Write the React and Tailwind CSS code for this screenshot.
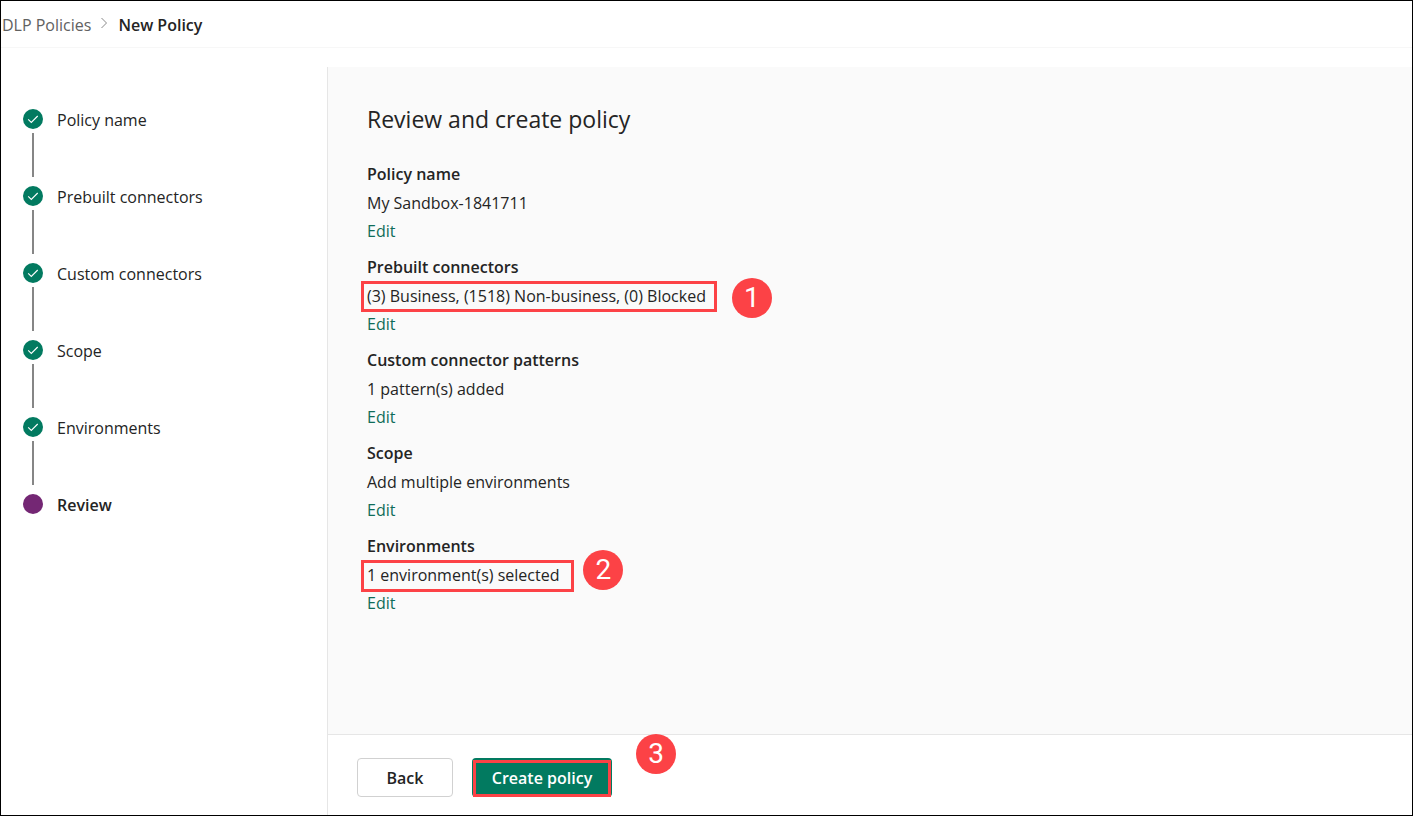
const steps = ['Policy name', 'Prebuilt connectors', 'Custom connectors', 'Scope', 'Environments'];

const sections = [
  { title: 'Policy name', value: 'My Sandbox-1841711' },
  { title: 'Prebuilt connectors', value: '(3) Business, (1518) Non-business, (0) Blocked', callout: 1 },
  { title: 'Custom connector patterns', value: '1 pattern(s) added' },
  { title: 'Scope', value: 'Add multiple environments' },
  { title: 'Environments', value: '1 environment(s) selected', callout: 2 },
];

const callouts = {
  1: {
    box: 'absolute -left-[6px] -right-[11px] -top-px -bottom-0.5 border-3 border-[#fc4246] pointer-events-none',
    badge: 'absolute left-full ml-[26px] -top-1',
  },
  2: {
    box: 'absolute -left-[6px] -right-[15px] -top-px -bottom-[3px] border-3 border-[#fc4246] pointer-events-none',
    badge: 'absolute left-full ml-6 -top-[11px]',
  },
};

function Badge({ n, className }) {
  return (
    <span className={className}>
      <span className="flex size-10 items-center justify-center rounded-full bg-[#fc4246] font-['Roboto',sans-serif] text-[28px] leading-10 text-white">
        {n}
      </span>
    </span>
  );
}

function Step({ label }) {
  return (
    <li className="flex h-[77px] gap-3.5">
      <div className="flex flex-col items-center gap-1">
        <span className="flex size-5 items-center justify-center rounded-full bg-[#027a60]">
          <svg viewBox="0 0 20 20" className="size-5" fill="none" stroke="#fff" strokeWidth="1.1" aria-hidden="true">
            <path d="M5.2 10.3 8.3 13.4 14.7 7" />
          </svg>
        </span>
        <span className="h-11 w-0.5 bg-[#868686]" />
      </div>
      <span className="leading-[22px]">{label}</span>
    </li>
  );
}

export default function App() {
  return (
    <div className="flex min-h-screen flex-col border border-black bg-white font-['Open_Sans','Noto_Sans',sans-serif] text-base text-[#242424]">
      <nav aria-label="Breadcrumb" className="flex h-[47px] items-center border-b border-[#f7f7f7] pt-0.5 pl-px">
        <a href="#policies" className="text-[#616161]">DLP Policies</a>
        <svg viewBox="0 0 8 12" className="mr-2.5 mb-1 ml-[9px] h-3 w-2" fill="none" stroke="#8a8a8a" strokeWidth="1" aria-hidden="true">
          <path d="M1.5 1 6.5 6l-5 5" />
        </svg>
        <span className="font-semibold" aria-current="page">New Policy</span>
      </nav>
      <div className="mt-[19px] flex flex-1">
        <aside className="w-[326px] shrink-0 pt-[42px] pl-[22px]">
          <ol>
            {steps.map((s) => <Step key={s} label={s} />)}
            <li className="flex gap-3.5" aria-current="step">
              <span className="size-5 rounded-full bg-[#742774]" />
              <span className="leading-[22px] font-semibold">Review</span>
            </li>
          </ol>
        </aside>
        <div className="flex flex-1 flex-col border-l border-[#e6e6e6]">
          <main className="flex-1 bg-[#fafafa] pt-9 pl-[39px]">
            <h1 className="text-[23px] leading-8">Review and create policy</h1>
            <div className="mt-6 flex flex-col gap-[7px]">
              {sections.map(({ title, value, callout }) => (
                <section key={title} className="leading-7">
                  <h2 className="leading-[30px] font-semibold">{title}</h2>
                  <div className="flex">
                    <p className="relative whitespace-nowrap">
                      {value}
                      {callout && <span className={callouts[callout].box} />}
                      {callout && <Badge n={callout} className={callouts[callout].badge} />}
                    </p>
                  </div>
                  <a href="#edit" className="block w-fit text-[#0f6c59]">Edit</a>
                </section>
              ))}
            </div>
          </main>
          <footer className="flex h-[81px] gap-[19px] border-t border-[#e6e6e6] bg-white pt-[23px] pl-[29px]">
            <button type="button" className="h-[39px] w-24 rounded border border-[#d1d1d1] bg-white font-semibold">Back</button>
            <div className="relative h-[39px]">
              <button type="button" className="h-[39px] w-[140px] rounded bg-[#027a60] font-semibold text-white">Create policy</button>
              <span className="pointer-events-none absolute inset-x-px top-0.5 bottom-0 border-3 border-[#fc4246]" />
              <Badge n={3} className="absolute -top-6 left-full ml-6" />
            </div>
          </footer>
        </div>
      </div>
    </div>
  );
}
